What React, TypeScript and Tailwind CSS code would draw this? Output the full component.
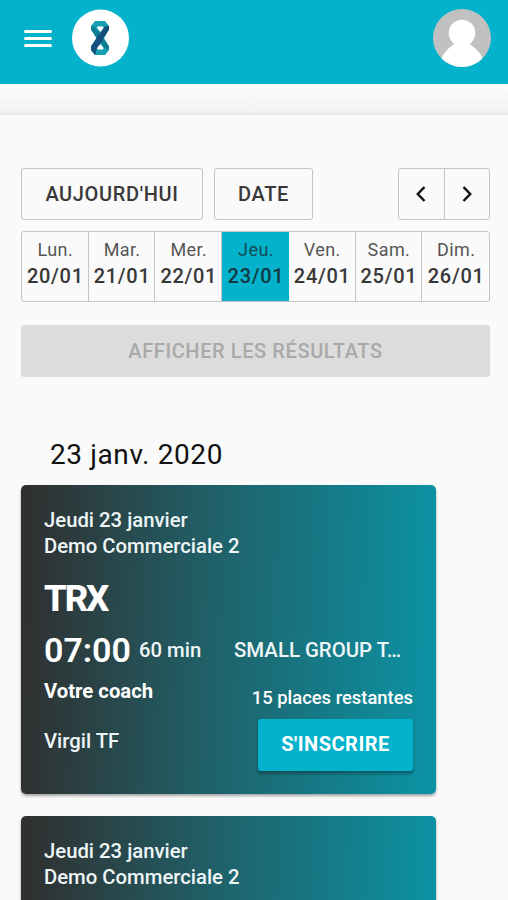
const days = [
  { name: "Lun.", date: "20/01" },
  { name: "Mar.", date: "21/01" },
  { name: "Mer.", date: "22/01" },
  { name: "Jeu.", date: "23/01", active: true },
  { name: "Ven.", date: "24/01" },
  { name: "Sam.", date: "25/01" },
  { name: "Dim.", date: "26/01" },
];

const courses = [
  {
    id: 1,
    day: "Jeudi 23 janvier",
    place: "Demo Commerciale 2",
    details: {
      title: "TRX",
      time: "07:00",
      duration: "60 min",
      category: "SMALL GROUP T…",
      coach: "Virgil TF",
      left: "15 places restantes",
    },
  },
  {
    id: 2,
    day: "Jeudi 23 janvier",
    place: "Demo Commerciale 2",
  },
];

function Logo() {
  return (
    <svg width="57" height="58" viewBox="0 0 57 58">
      <circle cx="28.5" cy="29" r="28.5" fill="#fff" />
      <path d="M23 12 H33 L37 17 V20.5 L32 29 L37 37.5 V41 L33 46 H23 L19 41 V37.5 L24.5 29 L19 20.5 V17 Z" fill="#12a0b2" />
      <path d="M19 17 L24 19 L31 29 L37 37.5 V41 L32.5 39 L24.5 29 L19 20.5 Z" fill="#0e7a94" />
      <path d="M37 17 V20.5 L25.5 39 L23 46 L19 41 V37.5 L32.5 17.5 Z" fill="#144f7d" />
      <path d="M25.5 17.5 H31 L31.5 19 L28.5 23 L25 19 Z" fill="#fff" />
      <path d="M28.5 35 L31.5 39 L31 40.5 H25.5 L25 39 Z" fill="#fff" />
    </svg>
  );
}

function Avatar() {
  return (
    <svg width="58" height="58" viewBox="0 0 58 58">
      <defs>
        <clipPath id="avatar">
          <circle cx="29" cy="29" r="29" />
        </clipPath>
      </defs>
      <g clipPath="url(#avatar)">
        <rect width="58" height="58" fill="#c1c1c1" />
        <circle cx="29" cy="24" r="13.3" fill="#fff" />
        <path d="M23 33 L35 33 C36 36 43 37 49 48 L49 58 L9 58 L9 48 C15 37 22 36 23 33 Z" fill="#fff" />
      </g>
    </svg>
  );
}

function Chevron({ d }: { d: string }) {
  return (
    <svg width="10" height="16" viewBox="0 0 10 16" fill="none" stroke="#111" strokeWidth="2.5">
      <path d={d} />
    </svg>
  );
}

function CourseCard({ course }: { course: (typeof courses)[number] }) {
  const details = course.details;

  return (
    <div className="h-[309px] w-[415px] shrink-0 rounded-[5px] bg-[linear-gradient(92deg,#303030_2%,#206068_45%,#0c92a3_98%)] px-[23px] pt-[23px] text-white shadow-[0_2px_3px_rgba(0,0,0,0.35)]">
      <div className="text-[20.3px] leading-[25.5px] font-medium text-[#eef5f6]">
        <p>{course.day}</p>
        <p>{course.place}</p>
      </div>

      {details && (
        <>
          <h2 className="mt-[15px] text-[36.5px] leading-[50px] font-extrabold tracking-[-2.2px]">{details.title}</h2>

          <div className="mt-[6px] flex h-[40px] items-center leading-[40px]">
            <span className="w-[95px] text-[34px] font-semibold">{details.time}</span>
            <span className="w-[95px] text-[20.3px] font-medium text-[#eef5f6]">{details.duration}</span>
            <span className="text-[20.4px] font-medium whitespace-nowrap text-[#eef5f6]">{details.category}</span>
          </div>

          {/* COACH + BOOKING */}
          <div className="mt-[8px] flex justify-between">
            <div className="text-[20.3px] leading-[26px]">
              <p className="font-bold">Votre coach</p>
              <p className="mt-[24px] font-medium text-[#eef5f6]">{details.coach}</p>
            </div>
            <div className="flex flex-col items-end">
              <p className="mt-[7px] text-[18.4px] leading-[26px] font-medium">{details.left}</p>
              <button className="mt-[8px] h-[52px] w-[155px] rounded-[3px] bg-[#04b2cc] pb-[2px] text-[20px] font-bold tracking-[0.5px] shadow-[0_3px_3px_rgba(0,0,0,0.3)]">
                S'INSCRIRE
              </button>
            </div>
          </div>
        </>
      )}
    </div>
  );
}

export default function App() {
  return (
    <div className="flex h-[900px] w-[508px] flex-col overflow-hidden bg-[#fafafa] font-[Roboto,sans-serif] text-[#383838]">
      {/* HEADER */}
      <header className="flex h-[84px] shrink-0 items-start bg-[#04b2cc] pt-[9px] pr-[17px] pl-6">
        <div className="mt-[20.5px] mr-5 flex w-7 flex-col gap-[4px]">
          <span className="h-[3px] rounded-full bg-white" />
          <span className="h-[3px] rounded-full bg-white" />
          <span className="h-[3px] rounded-full bg-white" />
        </div>
        <Logo />
        <div className="ml-auto">
          <Avatar />
        </div>
      </header>
      <div className="h-[31px] shrink-0 border-b-2 border-[#e8e8e8] bg-linear-to-b from-[#fdfdfd] to-[#f2f2f2]" />

      <main className="flex flex-col px-[21px] pt-[53px]">
        {/* NAVIGATION */}
        <div className="flex h-[52px] w-[469px] text-[20px] font-medium tracking-[0.65px]">
          <button className="w-[182px] rounded-[3px] border-[1.5px] border-[#c4c4c4] pb-[1px]">AUJOURD'HUI</button>
          <button className="ml-[11px] w-[99px] rounded-[3px] border-[1.5px] border-[#c4c4c4] pb-[1px]">DATE</button>
          <div className="ml-auto flex w-[92px] rounded-[3px] border-[1.5px] border-[#c4c4c4]">
            <button className="flex flex-1 items-center justify-center border-r border-[#c4c4c4]">
              <Chevron d="M8.5 1 L1.8 8 L8.5 15" />
            </button>
            <button className="flex flex-1 items-center justify-center">
              <Chevron d="M1.5 1 L8.2 8 L1.5 15" />
            </button>
          </div>
        </div>

        {/* WEEK */}
        <div className="mt-[11px] grid h-[71px] w-[469px] grid-cols-7 rounded-[3px] border border-[#c4c4c4]">
          {days.map((day) => (
            <div
              key={day.date}
              className={
                day.active
                  ? "bg-[#04b2cc] pt-[4px] pl-px text-center text-[#133a43]"
                  : "border-r border-[#c4c4c4] pt-[4px] pl-px text-center last:border-r-0"
              }
            >
              <p className="text-[18px] leading-[27px] tracking-[0.4px] opacity-85">{day.name}</p>
              <p className="text-[20px] leading-[26px] font-medium tracking-[0.7px]">{day.date}</p>
            </div>
          ))}
        </div>

        <button className="mt-[23px] h-[52px] w-[469px] rounded-[3px] bg-[#dcdcdc] pb-[1px] text-[20px] font-medium tracking-[0.6px] text-[#a9a9a9]">
          AFFICHER LES RÉSULTATS
        </button>

        <h1 className="mt-[58px] ml-[29px] text-[28px] leading-[40px] tracking-[0.6px] text-[#111]">23 janv. 2020</h1>

        {/* COURSES */}
        <div className="mt-[10px] flex flex-col gap-[22px]">
          {courses.map((course) => (
            <CourseCard key={course.id} course={course} />
          ))}
        </div>
      </main>
    </div>
  );
}
